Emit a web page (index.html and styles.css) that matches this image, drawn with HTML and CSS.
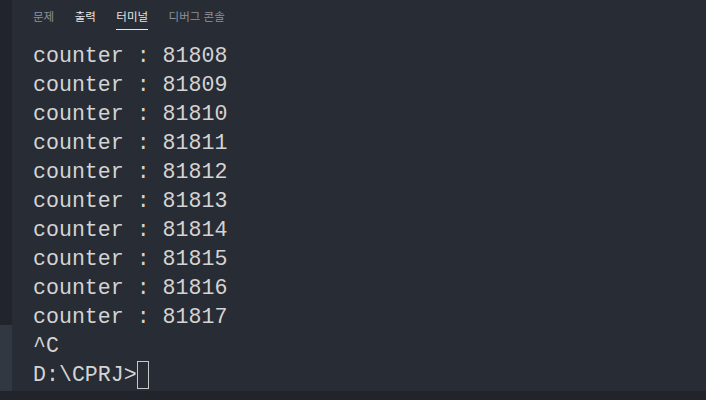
FILE: index.html
```html
<!DOCTYPE html>
<html lang="ko">
<head>
<meta charset="utf-8">
<link rel="stylesheet" href="styles.css">
</head>
<body>
<div class="app">
  <div class="main">
    <div class="side">
      <div class="side-fill"></div>
      <div class="side-thumb"></div>
    </div>
    <div class="panel">
      <div class="tabs">
        <span class="tab">문제</span>
        <span class="tab bright">출력</span>
        <span class="tab active">터미널</span>
        <span class="tab">디버그 콘솔</span>
      </div>
      <div class="term">
        <div class="line">counter : 81808</div>
        <div class="line">counter : 81809</div>
        <div class="line">counter : 81810</div>
        <div class="line">counter : 81811</div>
        <div class="line">counter : 81812</div>
        <div class="line">counter : 81813</div>
        <div class="line">counter : 81814</div>
        <div class="line">counter : 81815</div>
        <div class="line">counter : 81816</div>
        <div class="line">counter : 81817</div>
        <div class="line">^C</div>
        <div class="line">D:\CPRJ&gt;<span class="cursor"></span></div>
      </div>
    </div>
  </div>
  <div class="bottom"></div>
</div>
</body>
</html>
```
FILE: styles.css
```css
html, body {
  margin: 0;
  padding: 0;
  background: #282c34;
}
.app {
  width: 706px;
  height: 400px;
  display: flex;
  flex-direction: column;
  overflow: hidden;
}
.main {
  flex: 1;
  display: flex;
  min-height: 0;
}
.side {
  width: 12px;
  display: flex;
  flex-direction: column;
  background: #21252b;
}
.side-fill {
  flex: 1;
}
.side-thumb {
  height: 66px;
  background: #323842;
}
.panel {
  flex: 1;
  padding-left: 21px;
  display: flex;
  flex-direction: column;
}
.tabs {
  height: 30px;
  display: flex;
  gap: 20.5px;
  font-family: "Noto Sans CJK KR", "Noto Sans", sans-serif;
  font-size: 11.5px;
}
.tab {
  color: #8d9199;
  line-height: 16px;
  padding-top: 7.5px;
  box-sizing: border-box;
  height: 30px;
  border-bottom: 1px solid transparent;
}
.tab.bright {
  color: #e6e6e6;
}
.tab.active {
  color: #e6e6e6;
  border-bottom-color: #e6e6e6;
}
.term {
  padding-top: 11.5px;
  font-family: "Liberation Mono", monospace;
  font-size: 21.6px;
  line-height: 29px;
  color: #d4d4d4;
}
.line {
  white-space: pre;
  height: 29px;
}
.cursor {
  display: inline-block;
  width: 12px;
  height: 28px;
  box-sizing: border-box;
  border: 1px solid #c8c8c8;
  vertical-align: top;
}
.bottom {
  height: 9px;
  background: #21252b;
}
```
